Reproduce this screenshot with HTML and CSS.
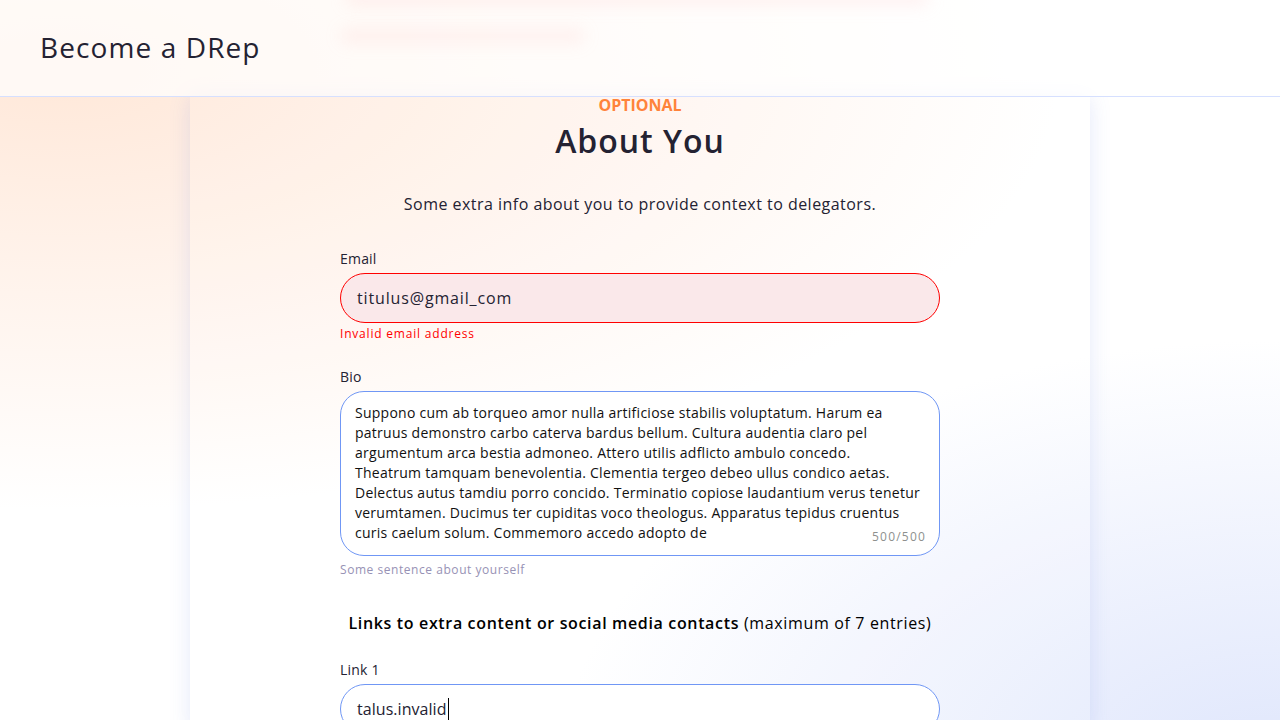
FILE: index.html
```html
<!DOCTYPE html>
<html lang="en">
<head>
<meta charset="utf-8">
<title>Become a DRep</title>
<link rel="stylesheet" href="styles.css">
</head>
<body>
<div class="page">
  <header class="topbar">
    <div class="topbar-ghost ghost-a"></div>
    <div class="topbar-ghost ghost-b"></div>
    <h1 class="topbar-title">Become a DRep</h1>
  </header>
  <main class="card">
    <div class="form">
      <p class="eyebrow">OPTIONAL</p>
      <h2 class="heading">About You</h2>
      <p class="lead">Some extra info about you to provide context to delegators.</p>

      <div class="field field-email">
        <label class="label">Email</label>
        <div class="input input-error">titulus@gmail_com</div>
        <p class="error">Invalid email address</p>
      </div>

      <div class="field field-bio">
        <label class="label">Bio</label>
        <div class="textarea">
          <div class="textarea-text">Suppono cum ab torqueo amor nulla artificiose stabilis voluptatum. Harum ea<br>patruus demonstro carbo caterva bardus bellum. Cultura audentia claro pel<br>argumentum arca bestia admoneo. Attero utilis adflicto ambulo concedo.<br>Theatrum tamquam benevolentia. Clementia tergeo debeo ullus condico aetas.<br>Delectus autus tamdiu porro concido. Terminatio copiose laudantium verus tenetur<br>verumtamen. Ducimus ter cupiditas voco theologus. Apparatus tepidus cruentus<br>curis caelum solum. Commemoro accedo adopto de</div>
          <span class="counter">500/500</span>
        </div>
        <p class="helper">Some sentence about yourself</p>
      </div>

      <p class="links-title"><strong>Links to extra content or social media contacts</strong> (maximum of 7 entries)</p>

      <div class="field field-link">
        <label class="label">Link 1</label>
        <div class="input input-focus">talus.invalid<span class="caret"></span></div>
      </div>
    </div>
  </main>
</div>
</body>
</html>
```

FILE: styles.css
```css
html, body {
  margin: 0;
  padding: 0;
  height: 720px;
  overflow: hidden;
}

body {
  font-family: "Open Sans", "Liberation Sans", sans-serif;
  color: #242232;
  background:
    radial-gradient(ellipse 720px 430px at 1280px 770px, #dfe6fc 0%, rgba(223, 230, 252, 0.6) 40%, rgba(255, 255, 255, 0) 100%),
    radial-gradient(ellipse 1000px 440px at 60px 70px, #ffe8d9 0%, rgba(255, 236, 224, 0.65) 45%, rgba(255, 255, 255, 0) 100%),
    #ffffff;
}

.page {
  display: flex;
  flex-direction: column;
  height: 720px;
}

.topbar {
  position: relative;
  height: 96px;
  flex: 0 0 96px;
  border-bottom: 1px solid #d6e0ff;
  background: rgba(255, 255, 255, 0.72);
  display: flex;
  align-items: center;
  padding-left: 40px;
  overflow: hidden;
  z-index: 2;
}

.topbar-ghost {
  position: absolute;
  filter: blur(8px);
  border-radius: 10px;
}

.ghost-a {
  left: 345px;
  top: -12px;
  width: 585px;
  height: 18px;
  background: rgba(255, 195, 195, 0.2);
}

.ghost-b {
  left: 340px;
  top: 28px;
  width: 245px;
  height: 16px;
  background: rgba(255, 180, 180, 0.14);
}

.topbar-title {
  position: relative;
  margin: 0;
  font-size: 28px;
  font-weight: 500;
  line-height: 40px;
  color: #242232;
  letter-spacing: 1.1px;
  margin-top: -3px;
}

.card {
  width: 900px;
  margin: 0 auto;
  flex: 1;
  background: rgba(255, 255, 255, 0.08);
  box-shadow: 0 0 20px rgba(80, 110, 220, 0.15);
}

.form {
  width: 600px;
  margin: 0 auto;
  display: flex;
  flex-direction: column;
}

.eyebrow {
  margin: 0;
  text-align: center;
  font-size: 16px;
  line-height: 16px;
  font-weight: 700;
  color: #ff833b;
}

.heading {
  margin: 8px 0 0;
  text-align: center;
  font-size: 32px;
  line-height: 40px;
  font-weight: 600;
  color: #242232;
  letter-spacing: 1px;
}

.lead {
  margin: 31px 0 0;
  text-align: center;
  font-size: 16px;
  line-height: 24px;
  color: #242232;
  letter-spacing: 0.47px;
}

.field {
  display: flex;
  flex-direction: column;
}

.field-email { margin-top: 33px; }
.field-bio { margin-top: 25px; }
.field-link { margin-top: 25px; }

.label {
  font-size: 14px;
  line-height: 20px;
  color: #242232;
  margin-bottom: 4px;
  letter-spacing: 0.2px;
}

.input {
  height: 48px;
  border-radius: 25px;
  padding: 0 16px;
  display: flex;
  align-items: center;
  font-size: 16px;
  color: #242232;
  background: #ffffff;
  border: 1px solid #7097f5;
}

.input-error {
  background: #fae8ea;
  border-color: #ff0000;
  letter-spacing: 0.85px;
}

.input-focus {
  letter-spacing: 0.05px;
}

.caret {
  display: inline-block;
  width: 1px;
  height: 22px;
  background: #000000;
  margin-left: 1px;
}

.error {
  margin: 3px 0 0;
  font-size: 12px;
  line-height: 16px;
  color: #ff0000;
  letter-spacing: 0.8px;
}

.textarea {
  position: relative;
  border: 1px solid #7097f5;
  border-radius: 24px;
  background: #ffffff;
  padding: 11px 14px 0;
  box-sizing: border-box;
  height: 165px;
}

.textarea-text {
  font-size: 14px;
  line-height: 20px;
  color: #111111;
  white-space: nowrap;
  letter-spacing: 0.26px;
}

.counter {
  position: absolute;
  right: 13px;
  bottom: 10px;
  font-size: 12px;
  line-height: 16px;
  color: #8e908e;
  letter-spacing: 1.2px;
}

.helper {
  margin: 6px 0 0;
  font-size: 12px;
  line-height: 16px;
  color: #9792b5;
  letter-spacing: 0.55px;
}

.links-title {
  margin: 33px 0 0;
  text-align: center;
  font-size: 16px;
  line-height: 24px;
  color: #000000;
  letter-spacing: 0.65px;
}

.links-title strong {
  font-weight: 600;
}
```
